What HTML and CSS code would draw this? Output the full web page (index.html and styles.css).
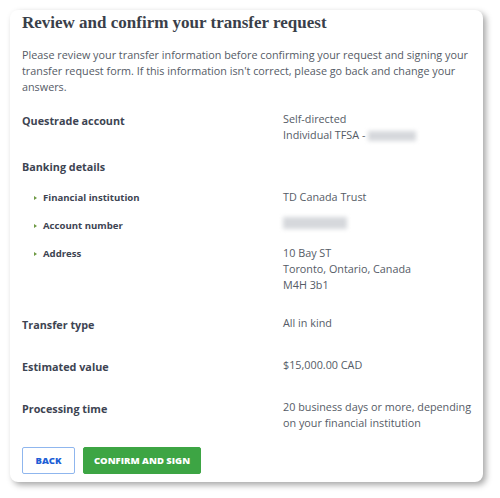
FILE: index.html
```html
<html>
  <head>
    <title>Review and confirm your transfer request</title>
    <link rel="stylesheet" href="styles.css">
  </head>
  <body>
    <div class="card">
      <h1>Review and confirm your transfer request</h1>
      <p class="intro">Please review your transfer information before confirming your request and signing your transfer request form. If this information isn't correct, please go back and change your answers.</p>

      <div class="row row-account">
        <div class="label">Questrade account</div>
        <div class="value">Self-directed<br>Individual TFSA - <span class="blur blur-short"></span></div>
      </div>

      <div class="row row-banking">
        <div class="label">Banking details</div>
      </div>

      <div class="row sub">
        <div class="label"><span class="arrow"></span>Financial institution</div>
        <div class="value">TD Canada Trust</div>
      </div>
      <div class="row sub">
        <div class="label"><span class="arrow"></span>Account number</div>
        <div class="value"><span class="blur blur-long"></span></div>
      </div>
      <div class="row sub">
        <div class="label"><span class="arrow"></span>Address</div>
        <div class="value">10 Bay ST<br>Toronto, Ontario, Canada<br>M4H 3b1</div>
      </div>

      <div class="row row-type">
        <div class="label">Transfer type</div>
        <div class="value">All in kind</div>
      </div>
      <div class="row row-wide">
        <div class="label">Estimated value</div>
        <div class="value">$15,000.00 CAD</div>
      </div>
      <div class="row row-wide">
        <div class="label">Processing time</div>
        <div class="value">20 business days or more, depending on your financial institution</div>
      </div>

      <div class="actions">
        <button class="btn btn-back">Back</button>
        <button class="btn btn-confirm">Confirm and sign</button>
      </div>
    </div>
  </body>
</html>
```

FILE: styles.css
```css
body { margin: 0; padding: 10px 0 0 10px; background: #ffffff; font: normal 10.8px "Open Sans", "Liberation Sans", sans-serif; color: #555b66; }
.card { width: 473px; box-sizing: border-box; padding: 2px 6px 8px 12px; background: #ffffff; border-radius: 8px; box-shadow: 3px 3px 6px rgba(0, 0, 0, 0.35); }
h1 { margin: 0; font: bold 17px/22px "Liberation Serif", "DejaVu Serif", serif; color: #3a3f4a; }
.intro { margin: 13px 6px 0 0; line-height: 16px; }
.row { display: grid; grid-template-columns: 261px 1fr; align-items: start; line-height: 16px; }
.label { font-weight: bold; color: #3d4452; margin: 2px 0 -2px 0; }
.value { height: auto; }
.row-account { margin-top: 16px; }
.row-banking { margin-top: 14px; }
.sub { margin-top: 12px; }
.row-banking + .sub { margin-top: 16px; }
.sub .label { font-size: 9.6px; padding-left: 12px; display: flex; align-items: center; margin: 1px 0 -1px 0; }
.arrow { width: 0; height: 0; border-top: 2.5px solid transparent; border-bottom: 2.5px solid transparent; border-left: 3px solid #6f9a45; margin-right: 6px; }
.row-type { margin-top: 22px; }
.row-wide { margin-top: 26px; }
.blur { display: inline-block; vertical-align: middle; background: #d6d8dc; filter: blur(2px); }
.blur-short { width: 48px; height: 10px; }
.blur-long { width: 64px; height: 12px; }
.actions { margin-top: 16px; display: flex; gap: 8px; }
.btn { height: 27px; padding: 0; border-radius: 2px; font: 800 9.5px "Open Sans", "Liberation Sans", sans-serif; text-transform: uppercase; white-space: nowrap; cursor: pointer; }
.btn-back { width: 53px; background: #ffffff; color: #1f5fd6; border: 1px solid #8fb6ee; }
.btn-confirm { width: 118px; background: #3da544; color: #ffffff; border: 1px solid #3da544; }
```
